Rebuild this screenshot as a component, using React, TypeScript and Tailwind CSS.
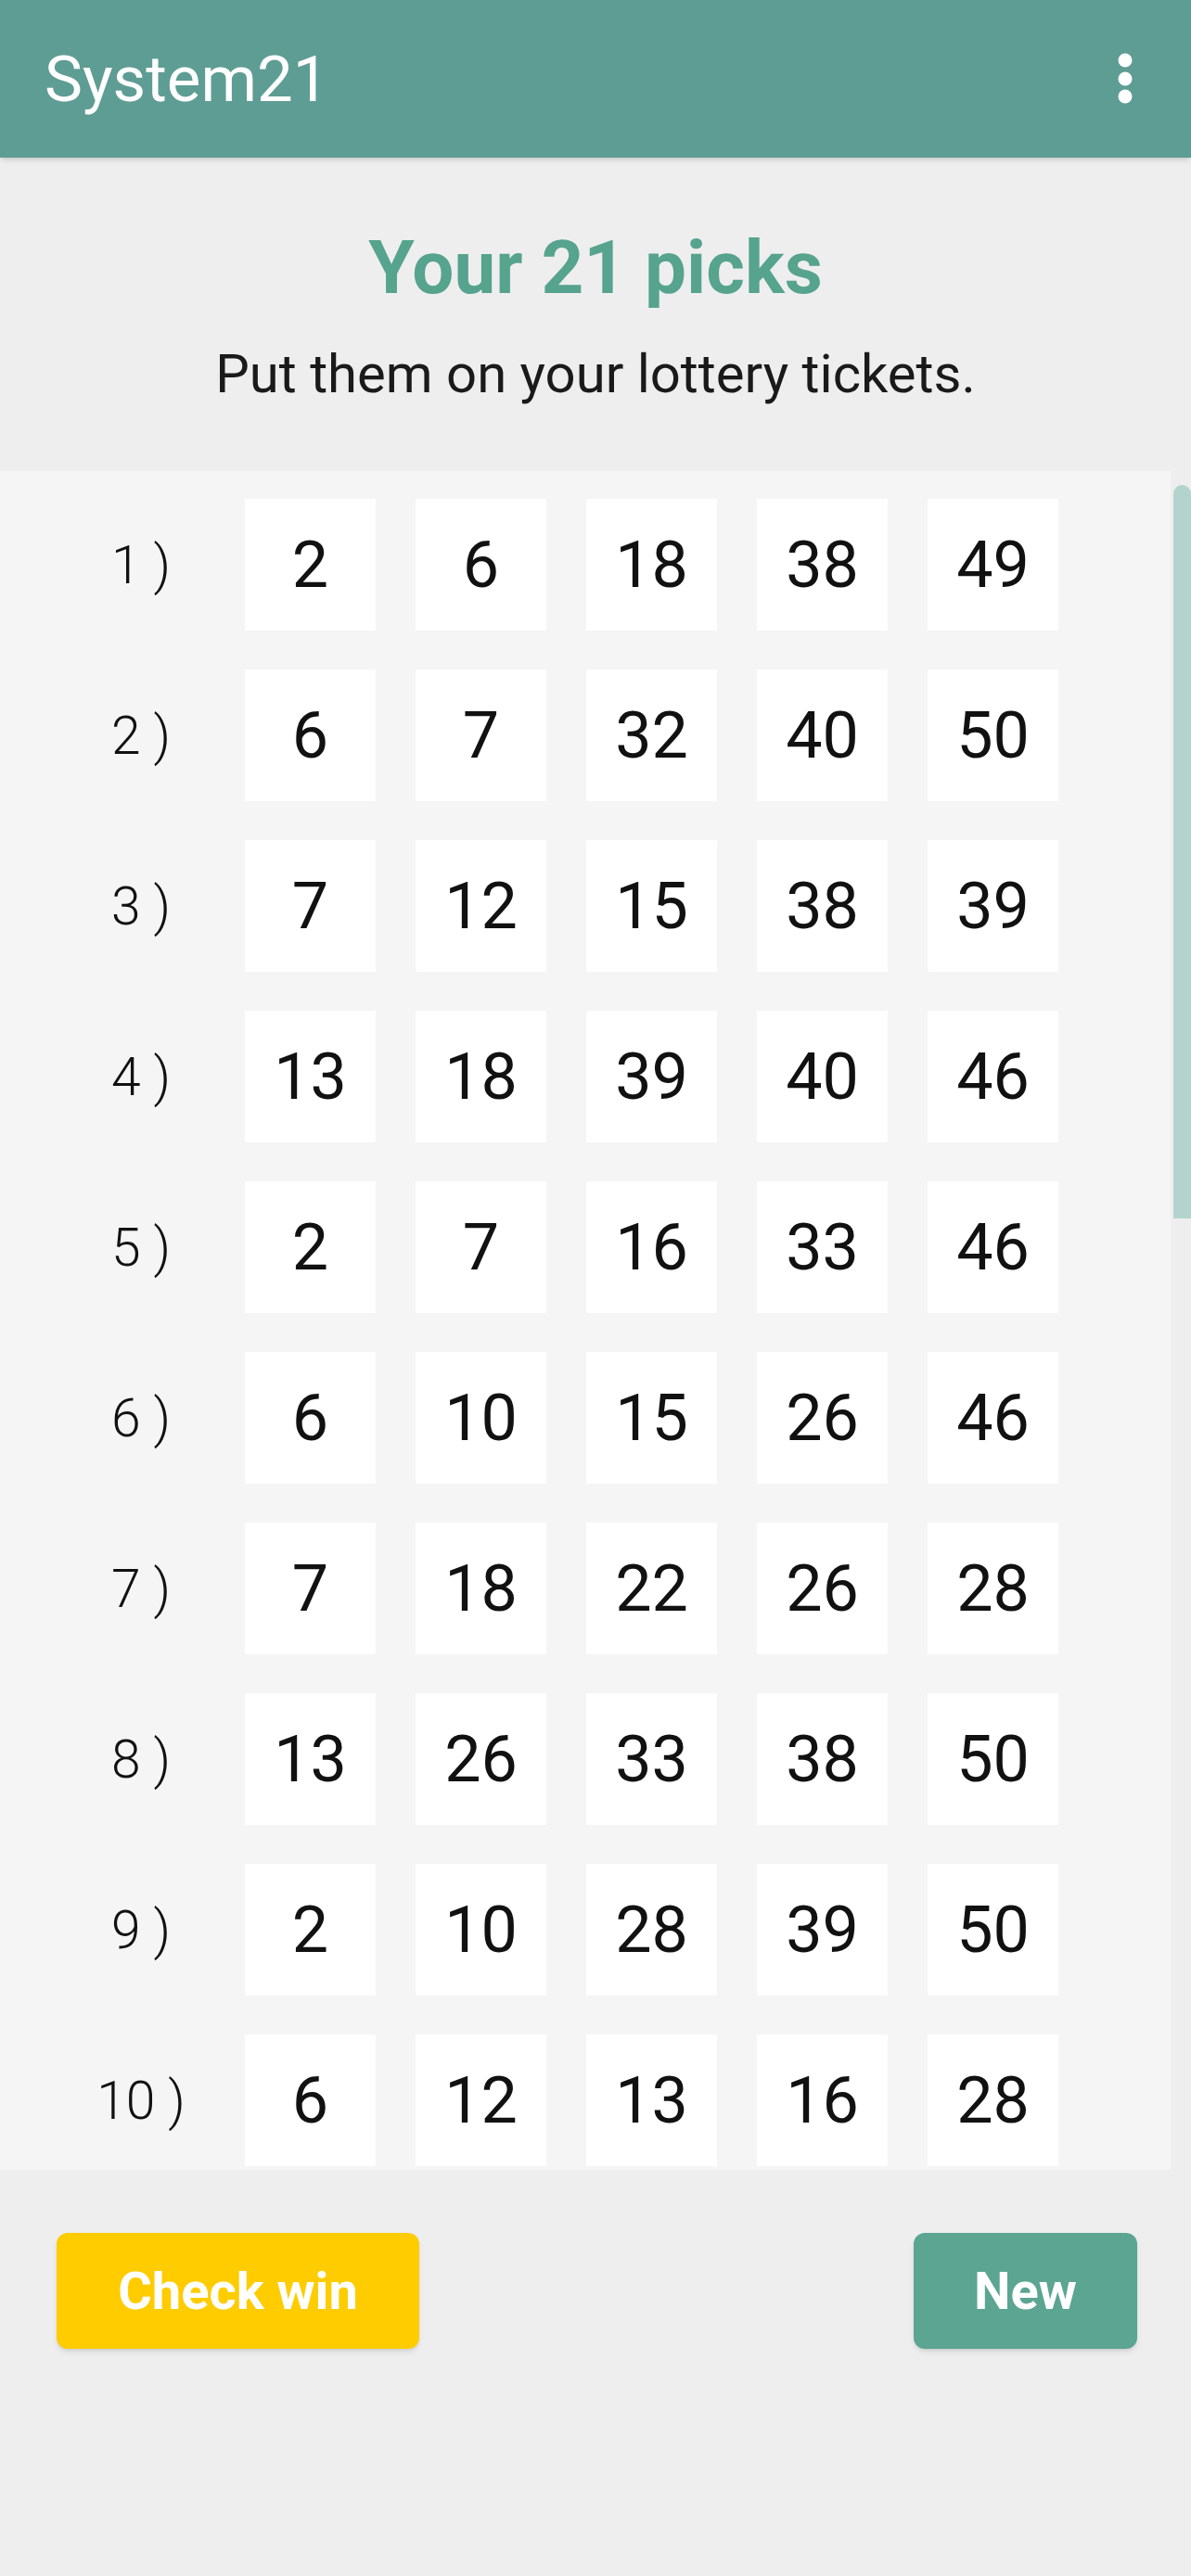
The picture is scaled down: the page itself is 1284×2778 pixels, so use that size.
const picks: number[][] = [
  [2, 6, 18, 38, 49],
  [6, 7, 32, 40, 50],
  [7, 12, 15, 38, 39],
  [13, 18, 39, 40, 46],
  [2, 7, 16, 33, 46],
  [6, 10, 15, 26, 46],
  [7, 18, 22, 26, 28],
  [13, 26, 33, 38, 50],
  [2, 10, 28, 39, 50],
  [6, 12, 13, 16, 28],
]

function MoreIcon() {
  return (
    <svg width="18" height="58" viewBox="0 0 18 58" fill="white">
      <circle cx="9" cy="9" r="7.5" />
      <circle cx="9" cy="29" r="7.5" />
      <circle cx="9" cy="48" r="7.5" />
    </svg>
  )
}

function PickRow({ index, numbers }: { index: number; numbers: number[] }) {
  return (
    <div className="flex items-center h-[142px]">
      <div className="w-[264px] pl-[40px] text-center text-[57px] font-light text-[#111] leading-none">
        {index} )
      </div>
      <div className="flex gap-[43px]">
        {numbers.map((n, i) => (
          <div
            key={i}
            className="w-[141px] h-[142px] bg-white flex items-center justify-center text-[70px] text-[#111] leading-none"
          >
            {n}
          </div>
        ))}
      </div>
    </div>
  )
}

export default function App() {
  return (
    <div className="min-h-[2778px] bg-[#eeeeee] font-['Roboto',sans-serif] flex flex-col">
      <header className="h-[170px] bg-[#5e9d93] flex items-center justify-between pl-[48px] pr-[62px] shadow-md">
        <h1 className="text-[69px] text-white leading-none">System21</h1>
        <MoreIcon />
      </header>

      <div className="pt-[73px] flex flex-col items-center">
        <h2 className="text-[80px] font-bold text-[#56a38e] leading-[92px]">Your 21 picks</h2>
        <p className="mt-[34px] text-[58px] text-[#1a1a1a] leading-[68px]">
          Put them on your lottery tickets.
        </p>
      </div>

      <div className="relative mt-[71px]">
        <div className="mr-[22px] h-[1832px] bg-[#f5f5f5] overflow-hidden pt-[30px] flex flex-col gap-[42px]">
          {picks.map((row, i) => (
            <PickRow key={i} index={i + 1} numbers={row} />
          ))}
        </div>
        <div className="absolute right-0 top-[15px] w-[19px] h-[791px] rounded-t-full bg-[#b3d4cc]" />
      </div>

      <div className="flex justify-between pl-[61px] pr-[58px] mt-[68px]">
        <button className="w-[391px] h-[125px] rounded-[12px] bg-[#ffcc00] text-white text-[56px] font-bold shadow-md">
          Check win
        </button>
        <button className="w-[241px] h-[125px] rounded-[12px] bg-[#5ba592] text-white text-[56px] font-bold shadow-md">
          New
        </button>
      </div>
    </div>
  )
}
